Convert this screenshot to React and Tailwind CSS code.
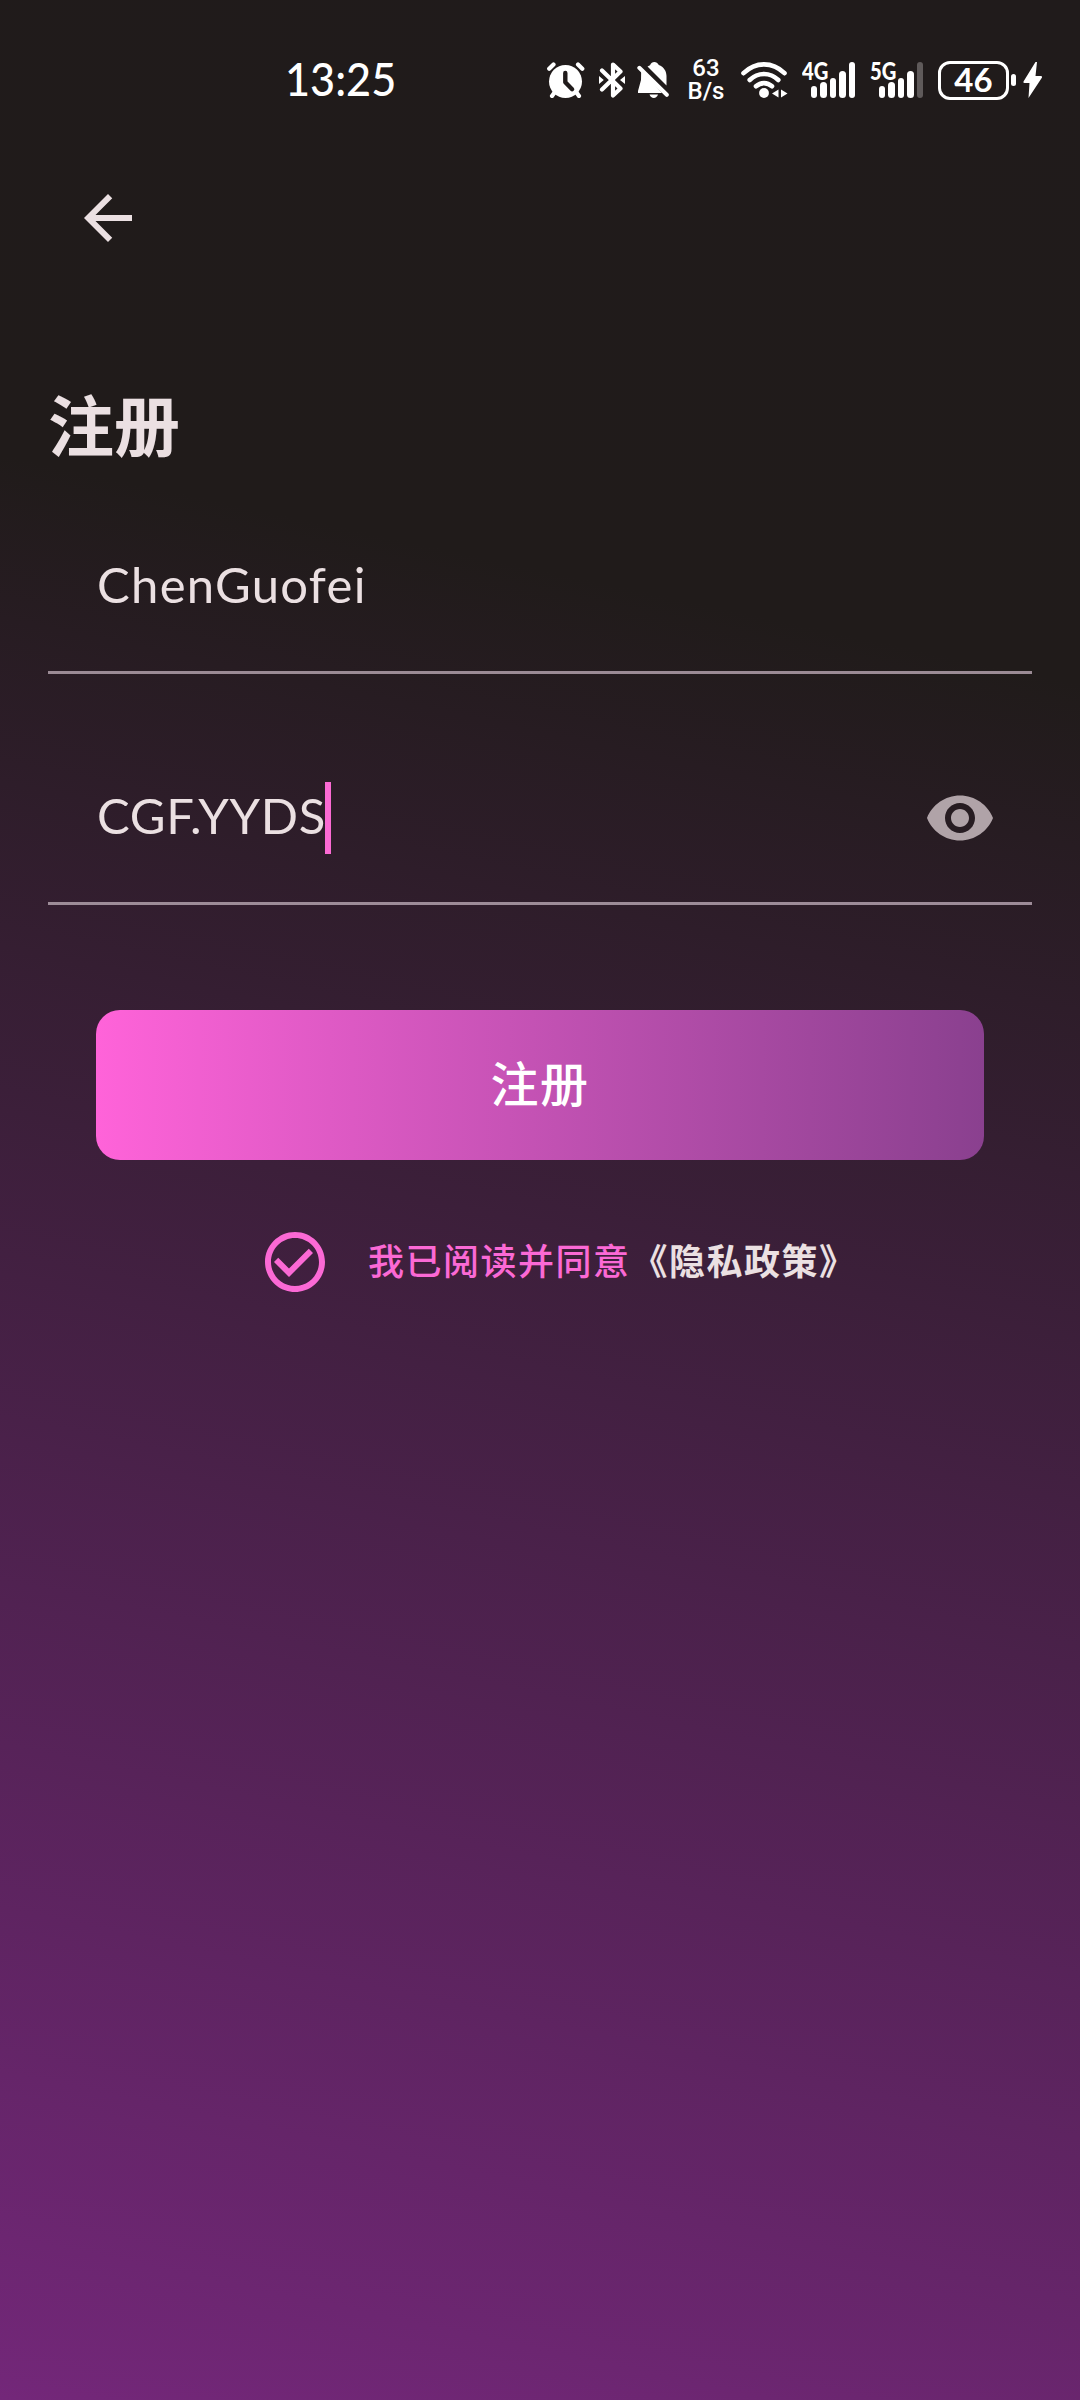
import React from "react";
import { MdArrowBack, MdVisibility, MdCheckCircleOutline } from "react-icons/md";

function AlarmIcon() {
  return (
    <svg width="38" height="36" viewBox="0 0 38 36" fill="none" className="shrink-0">
      <circle cx="18.500" cy="19.500" r="16.500" fill="#fff" />
      <path d="M2.200 6.700 6.500 2.400M35.300 6.700 31 2.400M7.500 30.500 5 34M29.500 30.500 32 34" stroke="#fff" strokeWidth="4.200" strokeLinecap="round" />
      <path d="M18.300 11v9.300l6.800 6.900" stroke="#201b1b" strokeWidth="4.400" strokeLinecap="round" strokeLinejoin="round" />
    </svg>
  );
}

function BluetoothIcon() {
  return (
    <svg width="26" height="36" viewBox="0 0 26 36" fill="none" className="shrink-0">
      <path d="M3 8.500 21.500 26.500 14 33.500V2.500l7.500 7L3 27.500" stroke="#fff" strokeWidth="4.200" strokeLinecap="round" strokeLinejoin="round" />
      <path d="M0 14 4.800 18 0 22ZM26 14 21 18 26 22Z" fill="#fff" />
    </svg>
  );
}

function BellOffIcon() {
  return (
    <svg width="32" height="36" viewBox="0 0 32 36" fill="none" className="shrink-0">
      <path d="M4.200 7.500 4 18l-3 11v2h24ZM10.500 4.500 13 3.200C14 1 15.500 0 17.300 0s3.500 1 4.500 3c5 2 7.700 6 7.700 11v9.500Z" fill="#fff" />
      <path d="M12.500 32.500h8.500c-.8 2.200-2.200 3.500-4.200 3.500s-3.600-1.300-4.300-3.500Z" fill="#fff" />
      <path d="M2.300 5.800 29.800 32.800" stroke="#fff" strokeWidth="4" strokeLinecap="round" />
    </svg>
  );
}

function WifiIcon() {
  return (
    <svg width="47" height="36" viewBox="0 0 47 36" fill="none" className="shrink-0">
      <path d="M2.500 11.200C14.500-.6 31.500-.6 43.500 11.200M8.700 18C17 10 29 10 37.300 18M15 24.300c4.800-4.300 11.200-4.300 16 0" stroke="#fff" strokeWidth="4.600" strokeLinecap="round" />
      <circle cx="23" cy="31" r="4.900" fill="#fff" />
      <path d="M37.500 27.500v8L31 31.500ZM40 27.500v8l6.500-4Z" fill="#fff" />
    </svg>
  );
}

function Signal({ label, last }) {
  return (
    <div className="relative h-[36px] w-[54px] shrink-0">
      <div className="absolute top-[-3px] left-0 origin-left scale-x-[0.84] text-[24px] leading-[24px] font-black">{label}</div>
      <div className="flex h-full items-end justify-end gap-[3px] pr-px">
        <i className="h-[12px] w-[6.500px] rounded-full bg-white" />
        <i className="h-[16px] w-[6.500px] rounded-full bg-white" />
        <i className="h-[20px] w-[6.500px] rounded-full bg-white" />
        <i className="h-[27px] w-[6.500px] rounded-full bg-white" />
        <i className={`h-[36px] w-[6.500px] rounded-full ${last}`} />
      </div>
    </div>
  );
}

function StatusBar() {
  return (
    <header className="flex h-[160px] items-center pl-[285px] font-[Lato,sans-serif] text-white">
      <div className="w-[262px] shrink-0 pb-[3px]">
        <div className="w-[130px] origin-left scale-x-[0.92] text-[47px] leading-none font-medium">13:25</div>
      </div>
      <div className="flex h-[40px] items-center">
        <AlarmIcon />
        <div className="w-[14px]" />
        <BluetoothIcon />
        <div className="w-[12px]" />
        <BellOffIcon />
        <div className="ml-[17px] w-[40px] text-center font-[Roboto,sans-serif] text-[24px] leading-[23px] font-medium">
          63<br />B/s
        </div>
        <div className="w-[15px]" />
        <WifiIcon />
        <div className="w-[14px]" />
        <Signal label="4G" last="bg-white" />
        <div className="w-[14px]" />
        <Signal label="5G" last="bg-[#5f5a5a]" />
        <div className="ml-[14px] flex h-[39px] w-[71px] items-center justify-center rounded-[12px] border-[3px] border-white pb-[2px] text-[33px] leading-none font-bold">46</div>
        <i className="ml-[2px] h-[12px] w-[5px] rounded-full bg-white" />
        <svg width="20" height="36" viewBox="0 0 20 36" className="ml-[7px] shrink-0">
          <path d="M12.500 0 .5 19.500q-.5 1.500 1 1.500H6.500L5.500 36 19 15.500q.5-1.500-1-1.500H12.500L14 0Z" fill="#fff" />
        </svg>
      </div>
    </header>
  );
}

export default function App() {
  return (
    <main className="flex h-[2400px] w-[1080px] flex-col overflow-hidden bg-[linear-gradient(192deg,#201b1b_0%,#201b1a_26%,#732779_100%)] font-[Lato,'Noto_Sans_CJK_SC',sans-serif] text-[#ebe0e2]">
      <StatusBar />
      <div className="flex h-[211px] pt-[22px] pl-[72px]">
        <MdArrowBack size={72} />
      </div>
      <h1 className="h-[132px] pl-[48px] text-[66px] leading-[109px] font-bold">注册</h1>
      <div className="mx-[48px] flex h-[171px] items-center border-b-[3px] border-[#9b8b95] pb-[4px] pl-[49px] text-[49px] tracking-[1.300px]">
        <span>ChenGuofei</span>
      </div>
      <div className="mx-[48px] flex h-[231px] items-center border-b-[3px] border-[#9d8c98] pt-[60px] pr-[36px] pl-[49px] text-[49px] tracking-[0.700px]">
        <span className="pb-[4px]">CGF.YYDS</span>
        <i className="-ml-px h-[72px] w-[6px] bg-[#fb6ad3]" />
        <MdVisibility size={72} className="ml-auto text-[#b0a3a8]" />
      </div>
      <button className="mx-[96px] mt-[105px] h-[150px] shrink-0 rounded-[24px] bg-linear-to-r from-[#ff63d9] to-[#8a408f] pb-[3px] text-[48px] font-medium tracking-[1.500px] text-white">注册</button>
      <div className="mt-[66px] flex h-[72px] items-center pl-[259px] text-[36px] tracking-[1.500px]">
        <MdCheckCircleOutline size={72} className="text-[#fb69d5]" />
        <span className="ml-[37px] pb-[3px] font-medium text-[#fb69d5]">我已阅读并同意</span>
        <span className="ml-px pb-[3px] font-bold">《隐私政策》</span>
      </div>
    </main>
  );
}
